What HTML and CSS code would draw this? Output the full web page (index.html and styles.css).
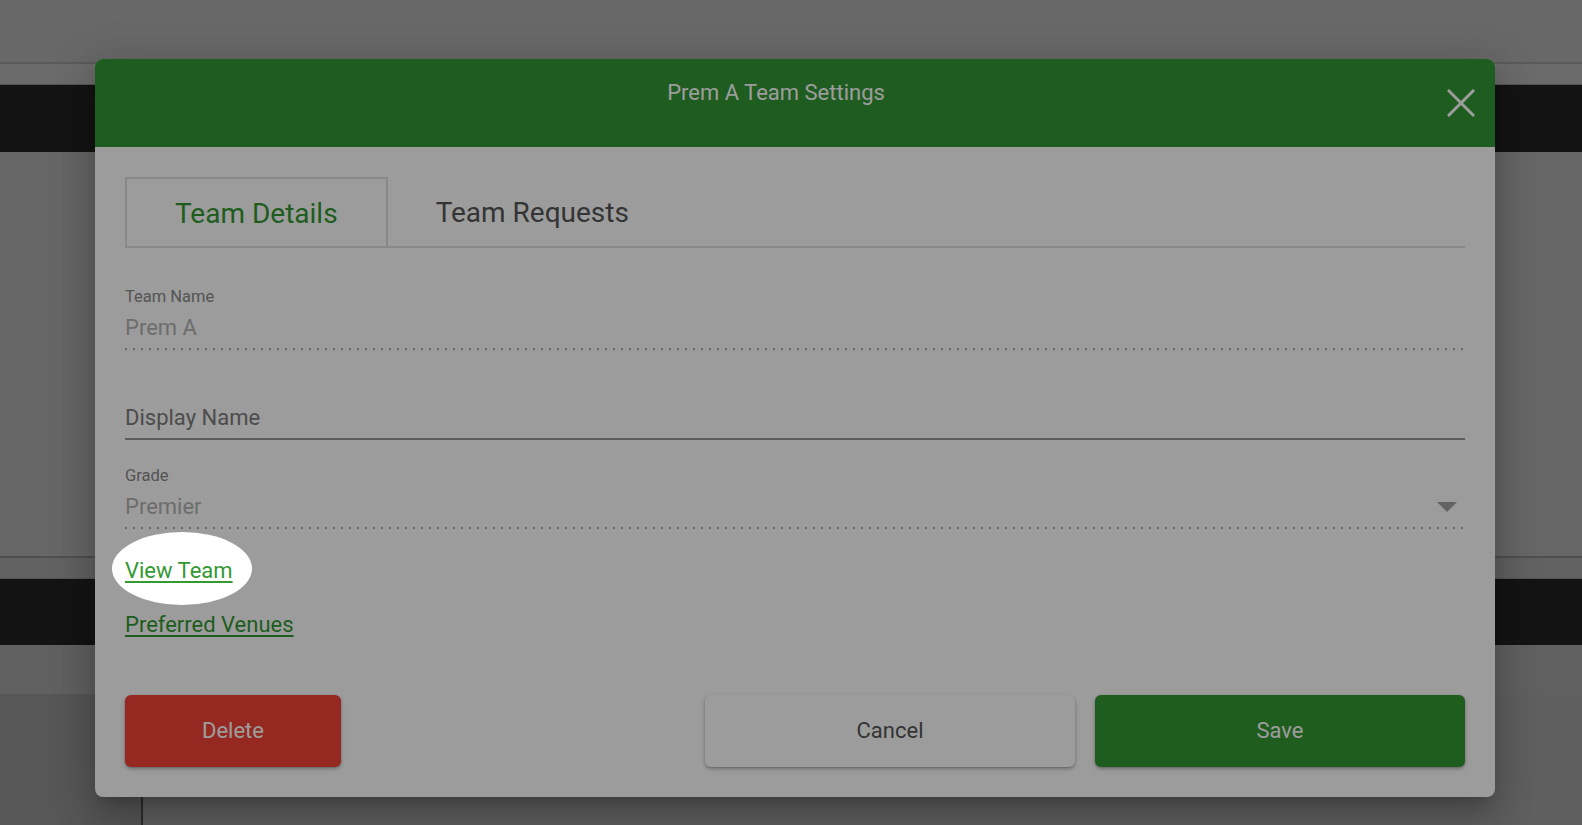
FILE: index.html
```html
<!DOCTYPE html>
<html lang="en">
<head>
<meta charset="utf-8">
<title>Prem A Team Settings</title>
<link rel="stylesheet" href="styles.css">
</head>
<body>
<div class="page">
  <div class="pg-top"></div>
  <div class="pg-line"></div>
  <div class="pg-band"></div>
  <div class="pg-dark"></div>
  <div class="pg-area"></div>
  <div class="pg-line pg-line-2"></div>
  <div class="pg-band pg-band-2"></div>
  <div class="pg-dark pg-dark-2"></div>
  <div class="pg-area pg-area-2"></div>
  <div class="pg-bottom">
    <div class="pg-cell-left"></div>
    <div class="pg-cell-right"></div>
  </div>
</div>

<div class="modal">
  <div class="modal-header">
    <div class="modal-title">Prem A Team Settings</div>
    <button class="close-btn" aria-label="Close">
      <svg width="28" height="28" viewBox="0 0 28 28"><path d="M2 2 L26 26 M26 2 L2 26" stroke="#ffffff" stroke-width="3" stroke-linecap="square" fill="none"/></svg>
    </button>
  </div>
  <div class="modal-body">
    <div class="tabs">
      <div class="tab tab-active">Team Details</div>
      <div class="tab">Team Requests</div>
    </div>

    <div class="field field-first">
      <div class="field-label">Team Name</div>
      <div class="field-value field-disabled">Prem A</div>
    </div>

    <div class="field">
      <div class="field-label"></div>
      <div class="field-value field-placeholder field-solid">Display Name</div>
    </div>

    <div class="field field-third">
      <div class="field-label">Grade</div>
      <div class="field-value field-disabled field-select"><span>Premier</span><span class="arrow"></span></div>
    </div>

    <div class="link-row"><a class="link spot" href="#">View Team</a></div>
    <div class="link-row"><a class="link" href="#">Preferred Venues</a></div>

    <div class="actions">
      <button class="btn btn-delete">Delete</button>
      <div class="actions-right">
        <button class="btn btn-cancel">Cancel</button>
        <button class="btn btn-save">Save</button>
      </div>
    </div>
  </div>
</div>
</body>
</html>
```

FILE: styles.css
```css
* { box-sizing: border-box; }
html, body { margin: 0; padding: 0; }
body {
  width: 1582px;
  height: 825px;
  overflow: hidden;
  font-family: Roboto, "Liberation Sans", sans-serif;
  position: relative;
  background: #9d9d9d;
}

/* background page (underneath overlay) */
.page { display: flex; flex-direction: column; height: 825px; }
.pg-top { height: 62px; background: #aaaaaa; }
.pg-line { height: 2px; background: #949494; }
.pg-band { height: 21px; background: #afafaf; border-bottom: 1px solid #8a8a8a; }
.pg-dark { height: 67px; background: #202020; }
.pg-area { height: 404px; background: #a8a8a8; }
.pg-line-2 { background: #828282; }
.pg-band-2 { background: #a0a0a0; }
.pg-dark-2 { height: 66px; }
.pg-area-2 { height: 49px; background: #9e9e9e; }
.pg-bottom { flex: 1; display: flex; }
.pg-cell-left { width: 143px; background: #8e8e8e; border-right: 2px solid #4a4a4a; }
.pg-cell-right { flex: 1; background: #9c9c9c; }

/* modal */
.modal {
  position: absolute;
  left: 95px;
  top: 59px;
  width: 1400px;
  background: #ffffff;
  border-radius: 8px;
  box-shadow: 0 11px 15px -7px rgba(0,0,0,.2), 0 24px 38px 3px rgba(0,0,0,.14), 0 9px 46px 8px rgba(0,0,0,.12);
}
.modal-header {
  height: 88px;
  background: #329733;
  border-radius: 8px 8px 0 0;
  padding: 22px 38px 0 0;
  position: relative;
}
.modal-title {
  color: #ffffff;
  font-size: 22px;
  line-height: 24px;
  text-align: center;
}
.close-btn {
  position: absolute;
  right: 20px;
  top: 30px;
  width: 28px;
  height: 28px;
  padding: 0;
  border: 0;
  background: transparent;
  display: flex;
}

.modal-body { padding: 30px; }

.tabs {
  display: flex;
  border-bottom: 2px solid #e0e0e0;
}
.tab {
  height: 69px;
  padding: 2px 48px 0;
  display: flex;
  align-items: center;
  font-size: 28px;
  color: #555555;
}
.tab-active {
  border: 2px solid #e0e0e0;
  border-bottom: 0;
  color: #339933;
}

.field { margin-top: 28px; }
.field-first { margin-top: 40px; }
.field-third { margin-top: 27px; }
.field-label {
  font-size: 16.5px;
  line-height: 18px;
  height: 18px;
  color: #8a8a8a;
  margin-bottom: 10px;
}
.field-value {
  font-size: 22px;
  line-height: 24px;
  padding-bottom: 8px;
  border-bottom: 2px solid transparent;
  background-image: repeating-linear-gradient(to right, #aaaaaa 0, #aaaaaa 2px, transparent 2px, transparent 8px);
  background-size: 100% 2px;
  background-position: 0 100%;
  background-repeat: no-repeat;
  background-origin: border-box;
}
.field-disabled { color: #b3b3b3; }
.field-placeholder { color: #7d7d7d; }
.field-solid {
  background-image: none;
  border-bottom-color: #9a9a9a;
}
.field-select { display: flex; align-items: center; justify-content: space-between; }
.arrow {
  width: 0;
  height: 0;
  border-left: 10px solid transparent;
  border-right: 10px solid transparent;
  border-top: 10px solid #a3a3a3;
  margin-right: 8px;
}

.link-row { margin-top: 30px; line-height: 24px; height: 24px; }
.link {
  font-size: 22px;
  line-height: 24px;
  color: #339933;
  text-decoration: underline;
  text-decoration-thickness: 2px;
  text-underline-offset: 3px;
  display: inline-block;
  position: relative;
}
.spot::before {
  content: "";
  position: absolute;
  left: -13px;
  top: -27px;
  width: 140px;
  height: 73px;
  border-radius: 50%;
  box-shadow: 0 0 0 3200px rgba(0,0,0,0.39);
  z-index: 100;
  pointer-events: none;
}

.actions {
  margin-top: 58px;
  display: flex;
  justify-content: space-between;
}
.actions-right { display: flex; gap: 20px; }
.btn {
  height: 72px;
  padding: 0 0 2px;
  border: 0;
  border-radius: 6px;
  font-family: Roboto, "Liberation Sans", sans-serif;
  font-size: 22px;
  box-shadow: 0 2px 4px rgba(0,0,0,.25), 0 1px 2px rgba(0,0,0,.15);
}
.btn-delete { width: 216px; background: #f44336; color: #ffffff; }
.btn-cancel { width: 370px; background: #ffffff; color: #555555; }
.btn-save { width: 370px; background: #339933; color: #ffffff; }
```
